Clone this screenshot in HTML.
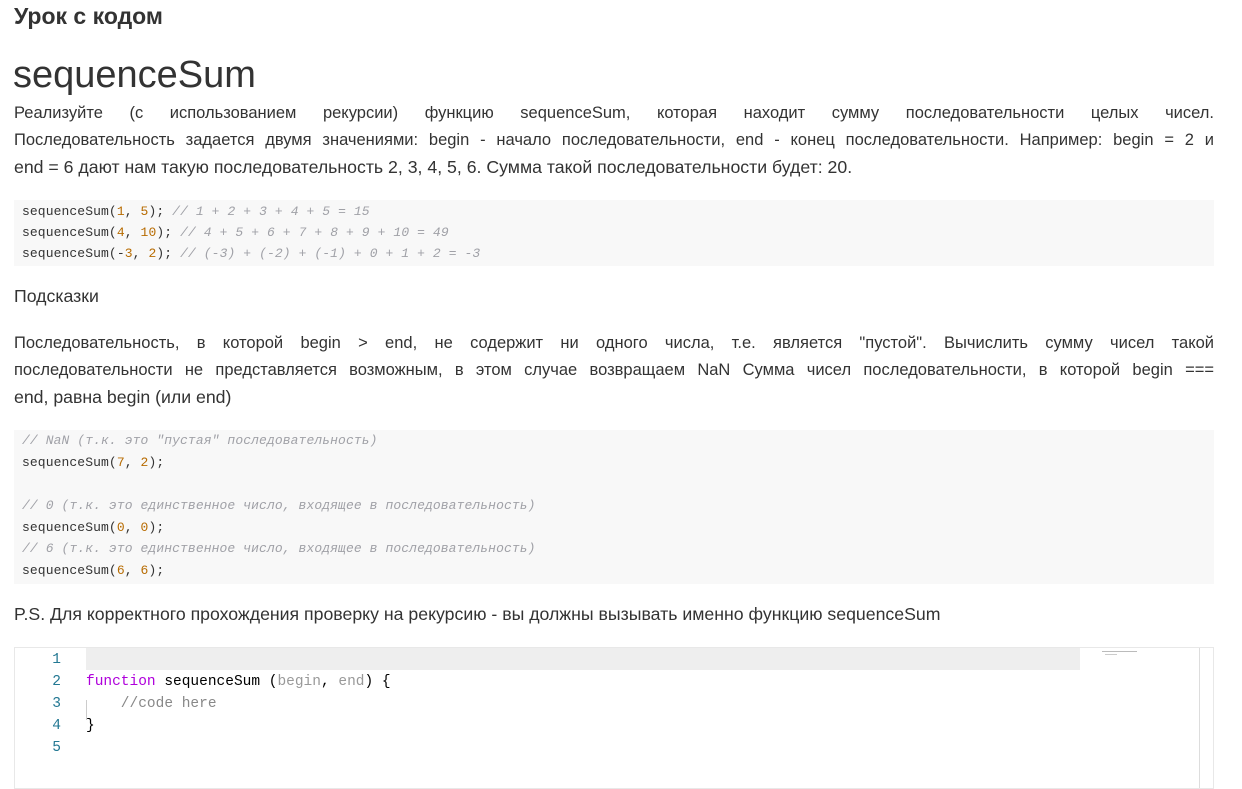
<!DOCTYPE html>
<html><head><meta charset="utf-8"><style>
body{margin:0;width:1242px;height:776px;overflow:hidden;background:#fff;font-family:"Liberation Sans",sans-serif;color:#333;position:relative}
.a{position:absolute;white-space:nowrap}
.j{position:absolute;left:14px;width:1200px;font-size:16.5px;text-align:justify;text-align-last:justify;white-space:nowrap;line-height:20px}
.l{position:absolute;left:14px;font-size:17.7px;line-height:20px;white-space:nowrap}
.code{position:absolute;left:14px;width:1200px;background:#f8f8f8}
.code div{position:absolute;left:8px;font-family:"Liberation Mono",monospace;font-size:13px;letter-spacing:0.1px;color:#333;white-space:pre;line-height:16px}
.code .c{color:#a0a1a7;font-style:italic}
.n{color:#b76b01}
.ed{position:absolute;left:14px;top:647px;width:1198px;height:140px;border:1px solid #e8e8e8;background:#fff}
.ln{position:absolute;left:30px;width:16px;text-align:right;font-family:"Liberation Mono",monospace;font-size:14.5px;color:#237893;line-height:22px}
.ec{position:absolute;left:71px;font-family:"Liberation Mono",monospace;font-size:14.5px;white-space:pre;line-height:22px;color:#000}
</style></head><body>
<div class="a" style="left:14px;top:3px;font-size:23px;font-weight:bold;color:#333">Урок с кодом</div>
<div class="a" style="left:13px;top:54px;font-size:38px;color:#333">sequenceSum</div>
<div class="j" style="top:103px">Реализуйте (с использованием рекурсии) функцию sequenceSum, которая находит сумму последовательности целых чисел.</div>
<div class="j" style="top:130px">Последовательность задается двумя значениями: begin - начало последовательности, end - конец последовательности. Например: begin = 2 и</div>
<div class="l" style="top:157px">end = 6 дают нам такую последовательность 2, 3, 4, 5, 6. Сумма такой последовательности будет: 20.</div>

<div class="code" style="top:200px;height:66px">
<div style="top:4px">sequenceSum(<span class="n">1</span>, <span class="n">5</span>); <span class="c">// 1 + 2 + 3 + 4 + 5 = 15</span></div>
<div style="top:25px">sequenceSum(<span class="n">4</span>, <span class="n">10</span>); <span class="c">// 4 + 5 + 6 + 7 + 8 + 9 + 10 = 49</span></div>
<div style="top:46px">sequenceSum(-<span class="n">3</span>, <span class="n">2</span>); <span class="c">// (-3) + (-2) + (-1) + 0 + 1 + 2 = -3</span></div>
</div>

<div class="l" style="top:286px">Подсказки</div>
<div class="j" style="top:333px">Последовательность, в которой begin &gt; end, не содержит ни одного числа, т.е. является "пустой". Вычислить сумму чисел такой</div>
<div class="j" style="top:360px">последовательности не представляется возможным, в этом случае возвращаем NaN Сумма чисел последовательности, в которой begin ===</div>
<div class="l" style="top:387px">end, равна begin (или end)</div>

<div class="code" style="top:430px;height:154px">
<div style="top:3px" class="c">// NaN (т.к. это "пустая" последовательность)</div>
<div style="top:25px">sequenceSum(<span class="n">7</span>, <span class="n">2</span>);</div>
<div style="top:68px" class="c">// 0 (т.к. это единственное число, входящее в последовательность)</div>
<div style="top:90px">sequenceSum(<span class="n">0</span>, <span class="n">0</span>);</div>
<div style="top:111px" class="c">// 6 (т.к. это единственное число, входящее в последовательность)</div>
<div style="top:133px">sequenceSum(<span class="n">6</span>, <span class="n">6</span>);</div>
</div>

<div class="l" style="top:604px">P.S. Для корректного прохождения проверку на рекурсию - вы должны вызывать именно функцию sequenceSum</div>

<div class="ed">
<div style="position:absolute;left:71px;top:0;width:994px;height:22px;background:#eeeeee"></div>
<div style="position:absolute;left:1184px;top:0;width:1px;height:140px;background:#ddd"></div>
<div style="position:absolute;left:1087px;top:3px;width:35px;height:1px;background:#bbb"></div>
<div style="position:absolute;left:1090px;top:6px;width:12px;height:1px;background:#ccc"></div>
<div class="ln" style="top:1px">1</div>
<div class="ln" style="top:23px">2</div>
<div class="ln" style="top:45px">3</div>
<div class="ln" style="top:67px">4</div>
<div class="ln" style="top:89px">5</div>
<div class="ec" style="top:23px"><span style="color:#af00db">function</span> sequenceSum (<span style="color:#999">begin</span>, <span style="color:#999">end</span>) {</div>
<div style="position:absolute;left:71px;top:52px;width:1px;height:20px;background:#ccc"></div>
<div class="ec" style="top:45px;color:#888">    //code here</div>
<div class="ec" style="top:67px">}</div>
</div>
</body></html>
